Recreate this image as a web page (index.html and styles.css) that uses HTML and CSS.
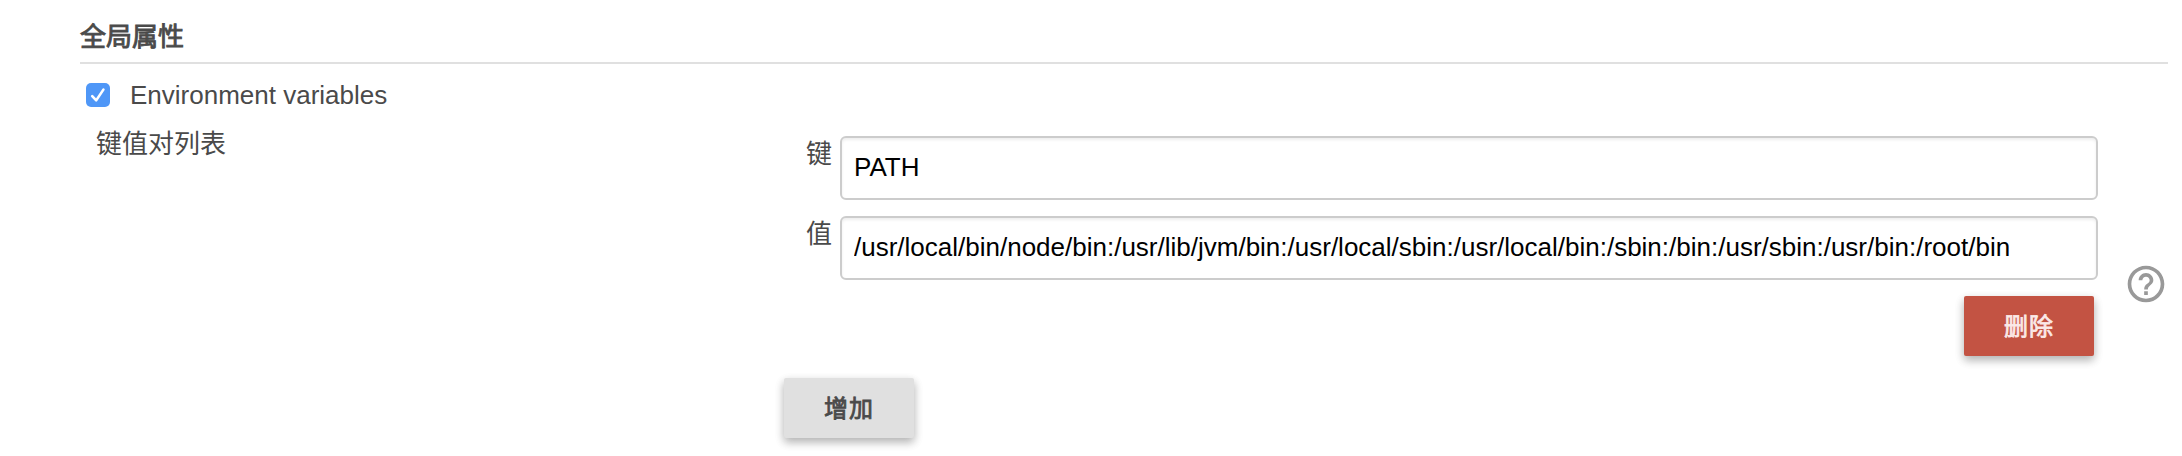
FILE: index.html
```
<!DOCTYPE html>
<html lang="zh-CN">
<head>
<meta charset="utf-8">
<title>全局属性</title>
<link rel="stylesheet" href="styles.css">
</head>
<body>
<main class="section">
  <h2 class="section-title">全局属性</h2>
  <label class="option">
    <span class="checkbox"><svg viewBox="0 0 24 24" width="24" height="24"><path d="M6.2 13.2 10.2 17.4 17.4 6.6" fill="none" stroke="#fff" stroke-width="2.6" stroke-linecap="round" stroke-linejoin="round"/></svg></span>
    <span class="option-text">Environment variables</span>
  </label>
  <div class="setting">
    <div class="setting-name">键值对列表</div>
    <div class="setting-main">
      <div class="field">
        <label class="field-label" for="key">键</label>
        <input class="field-input" id="key" type="text" value="PATH">
      </div>
      <div class="field">
        <label class="field-label" for="value">值</label>
        <input class="field-input" id="value" type="text" value="/usr/local/bin/node/bin:/usr/lib/jvm/bin:/usr/local/sbin:/usr/local/bin:/sbin:/bin:/usr/sbin:/usr/bin:/root/bin">
      </div>
      <div class="actions"><button class="button button-danger" type="button">删除</button></div>
      <button class="button" type="button">增加</button>
    </div>
    <svg class="help" viewBox="0 0 24 24" width="44" height="44"><path fill="#999" d="M11 18h2v-2h-2v2zm1-16C6.48 2 2 6.48 2 12s4.480 10 10 10 10-4.480 10-10S17.520 2 12 2zm0 18c-4.410 0-8-3.590-8-8s3.590-8 8-8 8 3.590 8 8-3.590 8-8 8zm0-14c-2.210 0-4 1.790-4 4h2c0-1.100.9-2 2-2s2 .9 2 2c0 2-3 1.750-3 5h2c0-2.250 3-2.500 3-5 0-2.210-1.790-4-4-4z"/></svg>
  </div>
</main>
</body>
</html>
```
FILE: styles.css
```
* {
  box-sizing: border-box;
}

body {
  margin: 0;
  background: #fff;
  color: #4a4a4a;
  font-family: "Liberation Sans", "Noto Sans CJK SC", sans-serif;
  font-size: 26px;
  line-height: 32px;
}

.section {
  width: 2182px;
  height: 456px;
  padding: 20px 14px 0 80px;
  overflow: hidden;
}

.section-title {
  height: 44px;
  margin: 0;
  padding-top: 1px;
  border-bottom: 2px solid #e0e0e0;
  font-size: 26px;
  line-height: 32px;
  font-weight: 400;
  -webkit-text-stroke: 0.9px currentColor;
}

.option {
  display: flex;
  align-items: center;
  gap: 20px;
  height: 32px;
  margin-top: 15px;
  padding-left: 6px;
}

.checkbox {
  display: flex;
  width: 24px;
  height: 24px;
  border-radius: 5px;
  background: #4f97f7;
}

.setting {
  display: flex;
  align-items: flex-start;
  margin-top: 16px;
}

.setting-name {
  width: 704px;
  padding: 1px 0 0 16px;
}

.setting-main {
  width: 1314px;
  padding-top: 9px;
}

.field {
  display: flex;
  gap: 8px;
  height: 64px;
  margin-bottom: 16px;
  padding-left: 22px;
}

.field-label {
  width: 26px;
  padding-top: 2px;
}

.field-input {
  width: 1258px;
  height: 64px;
  padding: 0 12px 1px;
  border: 2px solid #ccc;
  border-radius: 6px;
  background: #fff;
  box-shadow: inset 0 2px 3px rgba(0, 0, 0, 0.07);
  color: #000;
  font: inherit;
}

.actions {
  display: flex;
  justify-content: flex-end;
  margin-bottom: 22px;
  padding-right: 4px;
}

.button {
  display: block;
  width: 130px;
  height: 60px;
  padding: 0 0 4px;
  border: 0;
  border-radius: 2px;
  background: #e0e0e0;
  box-shadow: 0 4px 10px rgba(0, 0, 0, 0.16), 0 4px 10px rgba(0, 0, 0, 0.18);
  color: #4a4a4a;
  font-family: inherit;
  font-size: 24px;
  font-weight: 400;
  letter-spacing: 1px;
  -webkit-text-stroke: 0.8px currentColor;
}

.button-danger {
  background: #c35343;
  color: #fbe9e7;
}

.help {
  margin: 135px 0 0 26px;
}
```
